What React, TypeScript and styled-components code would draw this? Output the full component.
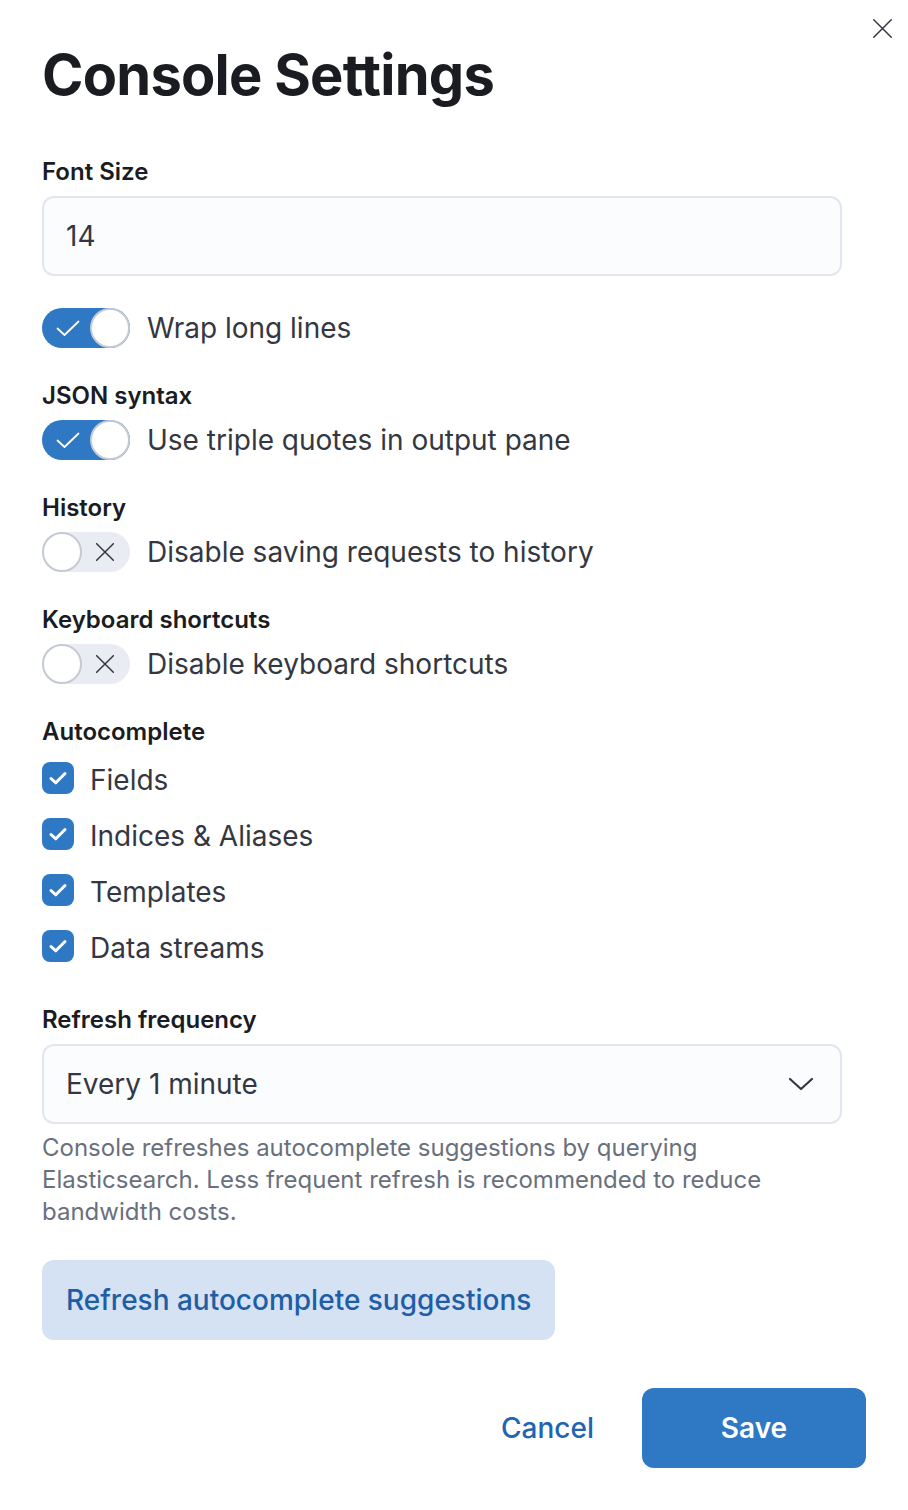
import React from "react";
import styled, { createGlobalStyle } from "styled-components";

const Global = createGlobalStyle`
  html, body { margin: 0; padding: 0; background: #ffffff; }
  body { font-family: Inter, "Noto Sans", "Liberation Sans", sans-serif; color: #343741; -webkit-font-smoothing: antialiased; }
  * { box-sizing: border-box; }
`;

const Flyout = styled.div`
  position: relative;
  width: 908px;
  min-height: 1510px;
  padding: 43px 42px 42px 42px;
  display: flex;
  flex-direction: column;
  background: #fff;
`;

const CloseButton = styled.button`
  position: absolute;
  top: 8px;
  right: 6px;
  width: 40px;
  height: 40px;
  border: none;
  background: transparent;
  padding: 0;
  display: flex;
  align-items: center;
  justify-content: center;
  cursor: pointer;
`;

const Title = styled.h2`
  margin: 0 0 49px 0;
  font-size: 56px;
  line-height: 64px;
  font-weight: 700;
  color: #1a1c21;
  letter-spacing: -0.75px;
`;

const Body = styled.div`
  display: flex;
  flex-direction: column;
  width: 800px;
`;

const FormRow = styled.div<{ $mt?: number }>`
  display: flex;
  flex-direction: column;
  margin-top: ${(p) => p.$mt ?? 0}px;
`;

const Label = styled.div<{ $mb?: number }>`
  font-size: 24px;
  line-height: 32px;
  font-weight: 600;
  color: #1a1c21;
  margin-bottom: ${(p) => p.$mb ?? 8}px;
`;

const TextField = styled.div`
  height: 80px;
  border: 2px solid #e3e6ef;
  border-radius: 12px;
  background: #fbfcfd;
  display: flex;
  align-items: center;
  padding: 0 22px;
  font-size: 28px;
  color: #343741;
`;

const SwitchRow = styled.label`
  display: flex;
  align-items: center;
  gap: 17px;
  height: 40px;
  font-size: 28px;
  color: #343741;
`;

const Track = styled.span<{ $on: boolean }>`
  position: relative;
  width: 88px;
  height: 40px;
  border-radius: 20px;
  background: ${(p) => (p.$on ? "#2f78c4" : "#e9ecf2")};
  display: flex;
  align-items: center;
  flex-shrink: 0;
`;

const Thumb = styled.span<{ $on: boolean }>`
  position: absolute;
  top: 0;
  left: ${(p) => (p.$on ? "48px" : "0")};
  width: 40px;
  height: 40px;
  border-radius: 50%;
  background: #fff;
  border: 2px solid #c5cad3;
`;

const TrackIcon = styled.span<{ $on: boolean }>`
  position: absolute;
  top: 0;
  left: ${(p) => (p.$on ? "12px" : "49px")};
  width: 28px;
  height: 40px;
  display: flex;
  align-items: center;
  justify-content: center;
`;

const CheckList = styled.div`
  display: flex;
  flex-direction: column;
  gap: 8px;
`;

const CheckRow = styled.label`
  display: flex;
  align-items: center;
  gap: 16px;
  height: 48px;
  font-size: 28px;
  color: #343741;
`;

const CheckText = styled.span`
  padding-top: 4px;
`;

const Box = styled.span`
  width: 32px;
  height: 32px;
  border-radius: 8px;
  background: #2f78c4;
  display: flex;
  align-items: center;
  justify-content: center;
  flex-shrink: 0;
`;

const Select = styled.div`
  height: 80px;
  border: 2px solid #e3e6ef;
  border-radius: 12px;
  background: #fbfcfd;
  display: flex;
  align-items: center;
  justify-content: space-between;
  padding: 0 26px 0 22px;
  font-size: 28px;
  color: #343741;
`;

const Help = styled.div`
  margin-top: 8px;
  font-size: 24px;
  line-height: 32px;
  color: #69707d;
`;

const SecondaryButton = styled.button`
  align-self: flex-start;
  margin-top: 32px;
  height: 80px;
  padding: 0 24px;
  border: none;
  border-radius: 12px;
  background: #d4e2f3;
  color: #1f5da6;
  font-family: inherit;
  font-size: 28px;
  font-weight: 500;
`;

const Footer = styled.div`
  margin-top: auto;
  display: flex;
  justify-content: flex-end;
  align-items: center;
  gap: 32px;
`;

const EmptyButton = styled.button`
  height: 80px;
  padding: 0 16px;
  border: none;
  background: transparent;
  color: #1f65b3;
  font-family: inherit;
  font-size: 28px;
  font-weight: 500;
`;

const PrimaryButton = styled.button`
  height: 80px;
  min-width: 224px;
  padding: 0 32px;
  border: none;
  border-radius: 12px;
  background: #2f78c4;
  color: #ffffff;
  font-family: inherit;
  font-size: 28px;
  font-weight: 600;
`;

const CheckIcon = ({ size = 24, color = "#fff", sw = 2 }: { size?: number; color?: string; sw?: number }) => (
  <svg width={size} height={size} viewBox="0 0 24 24" fill="none">
    <path d="M1.5 12.5 L8.5 19 L22.5 5.5" stroke={color} strokeWidth={sw} strokeLinecap="round" strokeLinejoin="round" />
  </svg>
);

const CrossIcon = ({ size = 24, color = "#343741", sw = 2 }: { size?: number; color?: string; sw?: number }) => (
  <svg width={size} height={size} viewBox="0 0 24 24" fill="none">
    <path d="M2 2 L22 22 M22 2 L2 22" stroke={color} strokeWidth={sw} strokeLinecap="round" />
  </svg>
);

const Toggle = ({ on, label }: { on: boolean; label: string }) => (
  <SwitchRow>
    <Track $on={on}>
      <TrackIcon $on={on}>
        {on ? <CheckIcon size={24} color="#fff" sw={1.8} /> : <CrossIcon size={20} color="#343741" sw={1.8} />}
      </TrackIcon>
      <Thumb $on={on} />
    </Track>
    {label}
  </SwitchRow>
);

const Check = ({ label }: { label: string }) => (
  <CheckRow>
    <Box>
      <svg width="22" height="22" viewBox="0 0 22 22" fill="none">
        <path d="M4 11.5 L8.8 15.8 L18 6.5" stroke="#fff" strokeWidth="3" strokeLinecap="round" strokeLinejoin="round" />
      </svg>
    </Box>
    <CheckText>{label}</CheckText>
  </CheckRow>
);

export default function App() {
  return (
    <>
      <Global />
      <Flyout>
        <CloseButton aria-label="Close">
          <CrossIcon size={21} color="#343741" sw={1.7} />
        </CloseButton>
        <Title>Console Settings</Title>
        <Body>
          <FormRow>
            <Label>Font Size</Label>
            <TextField>14</TextField>
          </FormRow>
          <FormRow $mt={32}>
            <Toggle on label="Wrap long lines" />
          </FormRow>
          <FormRow $mt={32}>
            <Label>JSON syntax</Label>
            <Toggle on label="Use triple quotes in output pane" />
          </FormRow>
          <FormRow $mt={32}>
            <Label>History</Label>
            <Toggle on={false} label="Disable saving requests to history" />
          </FormRow>
          <FormRow $mt={32}>
            <Label>Keyboard shortcuts</Label>
            <Toggle on={false} label="Disable keyboard shortcuts" />
          </FormRow>
          <FormRow $mt={32}>
            <Label $mb={6}>Autocomplete</Label>
            <CheckList>
              <Check label="Fields" />
              <Check label="Indices & Aliases" />
              <Check label="Templates" />
              <Check label="Data streams" />
            </CheckList>
          </FormRow>
          <FormRow $mt={34}>
            <Label>Refresh frequency</Label>
            <Select>
              <span>Every 1 minute</span>
              <svg width="26" height="16" viewBox="0 0 26 16" fill="none">
                <path d="M2 3 L13 13 L24 3" stroke="#343741" strokeWidth="2.2" strokeLinecap="round" strokeLinejoin="round" />
              </svg>
            </Select>
            <Help>
              Console refreshes autocomplete suggestions by querying Elasticsearch. Less frequent refresh is recommended to
              reduce bandwidth costs.
            </Help>
          </FormRow>
          <SecondaryButton>Refresh autocomplete suggestions</SecondaryButton>
        </Body>
        <Footer>
          <EmptyButton>Cancel</EmptyButton>
          <PrimaryButton>Save</PrimaryButton>
        </Footer>
      </Flyout>
    </>
  );
}
